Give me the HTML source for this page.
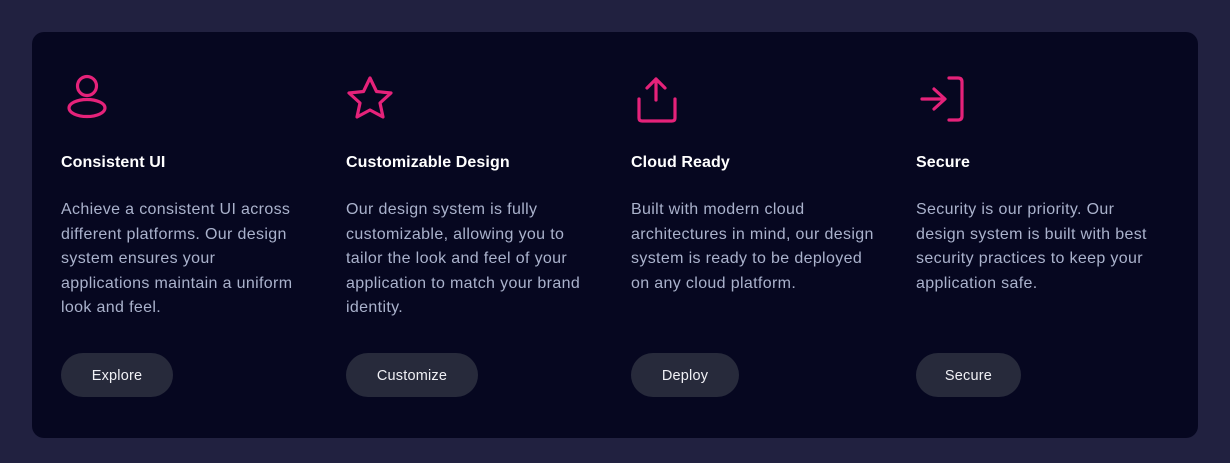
<!DOCTYPE html>
<html><head><style>
body{margin:0;width:1230px;height:463px;background:#212140;font-family:"Liberation Sans",sans-serif;position:relative;overflow:hidden}
.card{position:absolute;left:32px;top:32px;width:1166px;height:406px;background:#060720;border-radius:12px}
.col{position:absolute;top:0;width:250px}
h3{position:absolute;top:122px;margin:0;font-size:16px;font-weight:bold;color:#fff;white-space:nowrap;letter-spacing:0.1px}
p{position:absolute;top:166px;margin:0;font-size:16px;letter-spacing:0.35px;line-height:24.6px;color:#aab2cc;width:244px}
.btn{position:absolute;top:321px;height:44px;line-height:46px;border-radius:22px;background:#272a3b;color:#f0f0f5;font-size:14.5px;text-align:center;letter-spacing:0.2px}
svg{position:absolute;left:0;top:0}
</style></head><body>
<div class="card">
<svg width="1166" height="406" fill="none" stroke="#e5227a" stroke-width="3.2" stroke-linecap="round" stroke-linejoin="round">
<circle cx="55" cy="54" r="9.5"/>
<ellipse cx="55" cy="76" rx="18" ry="8.5"/>
<path d="M338 46 L344.5 59.5 L359 61 L348 71 L351 85 L338 78 L325 85 L328 71 L317 61 L331.5 59.5 Z"/>
<path d="M624 47 V68 M615 56 L624 47 L633 56 M607 67 V86 Q607 89 610 89 H640 Q643 89 643 86 V67"/>
<path d="M890 67 H912 M902 57 L913 67 L902 77 M917 46 H926 Q930 46 930 50 V84 Q930 88 926 88 H917"/>
</svg>
<div class="col" style="left:29px"><h3>Consistent UI</h3><p>Achieve a consistent UI across different platforms. Our design system ensures your applications maintain a uniform look and feel.</p><div class="btn" style="width:112px">Explore</div></div>
<div class="col" style="left:314px"><h3>Customizable Design</h3><p>Our design system is fully customizable, allowing you to tailor the look and feel of your application to match your brand identity.</p><div class="btn" style="width:132px">Customize</div></div>
<div class="col" style="left:599px"><h3>Cloud Ready</h3><p>Built with modern cloud architectures in mind, our design system is ready to be deployed on any cloud platform.</p><div class="btn" style="width:108px">Deploy</div></div>
<div class="col" style="left:884px"><h3>Secure</h3><p>Security is our priority. Our design system is built with best security practices to keep your application safe.</p><div class="btn" style="width:105px">Secure</div></div>
</div>
</body></html>
